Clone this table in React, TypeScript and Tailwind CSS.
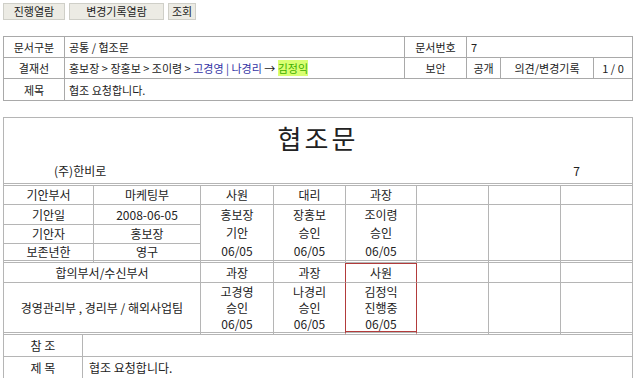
import React from "react";

const th = "h-[21px] border-r border-b border-[#a9a9a9] text-center p-0";
const td = "h-[21px] border-r border-b border-[#a9a9a9] text-left px-[4px] py-0";

const cell = "border-r border-b border-[#b5b5b5] text-center p-0";
const cellEnd = "border-b border-[#b5b5b5] text-center p-0";
const cellD = "border-r border-b-[3px] border-double border-[#b5b5b5] text-center p-0";
const cellEndD = "border-b-[3px] border-double border-[#b5b5b5] text-center p-0";

const Stack = ({ lines, tight }: { lines: string[]; tight?: boolean }) => (
  <div className={tight ? "flex flex-col items-center leading-[16px]" : "flex flex-col items-center leading-[18px]"}>
    {lines.map((l, i) => (
      <span key={i}>{l}</span>
    ))}
  </div>
);

const DocView = () => {
  return (
    <div className="w-[634px] h-[378px] overflow-hidden bg-white text-[#222] text-[12px] leading-[14px] font-['Noto_Sans_CJK_KR','Liberation_Sans',sans-serif]">
      <div className="flex gap-[4px] pt-[3px] pl-[3px]">
        <button className="w-[62px] h-[17px] leading-[15px] bg-[#ecebe4] border border-[#cfcfc8] text-[11px]">진행열람</button>
        <button className="w-[95px] h-[17px] leading-[15px] bg-[#ecebe4] border border-[#cfcfc8] text-[11px]">변경기록열람</button>
        <button className="w-[28px] h-[17px] leading-[15px] bg-[#ecebe4] border border-[#cfcfc8] text-[11px]">조회</button>
      </div>

      <table className="ml-[3px] mt-[16px] w-[630px] table-fixed border-separate border-spacing-0 border-l border-t border-[#a9a9a9] text-[11px]">
        <colgroup>
          <col className="w-[61px]" />
          <col className="w-[340px]" />
          <col className="w-[62px]" />
          <col className="w-[34px]" />
          <col className="w-[93px]" />
          <col className="w-[39px]" />
        </colgroup>
        <tbody>
          <tr>
            <td className={th}>문서구분</td>
            <td className={td}>공통 / 협조문</td>
            <td className={th}>문서번호</td>
            <td colSpan={3} className={td}>7</td>
          </tr>
          <tr>
            <td className={th}>결재선</td>
            <td className={td + " whitespace-nowrap"}>
              홍보장 &gt; 장홍보 &gt; 조이령 &gt;{" "}
              <span className="text-[#3535a5]">고경영 | 나경리</span> →{" "}
              <span className="text-[#3fae00] bg-[#d9ff72]">김정익</span>
            </td>
            <td className={th}>보안</td>
            <td className={th}>공개</td>
            <td className={th}>의견/변경기록</td>
            <td className={th}>1 / 0</td>
          </tr>
          <tr>
            <td className="h-[22px] border-r border-b border-[#a9a9a9] text-center p-0">제목</td>
            <td colSpan={5} className="h-[22px] border-r border-b border-[#a9a9a9] px-[4px] py-0">
              협조 요청합니다.
            </td>
          </tr>
        </tbody>
      </table>

      <div className="ml-[3px] mt-[16px] w-[630px] border border-[#b5b5b5]">
        <div className="h-[68px] border-b-[3px] border-double border-[#b5b5b5] flex flex-col">
          <div className="pt-[5px] text-center text-[26px] leading-[30px] tracking-[3px]">협조문</div>
          <div className="mt-auto flex justify-between pl-[50px] pr-[52px] pb-[4px] leading-[16px]">
            <span>(주)한비로</span>
            <span>7</span>
          </div>
        </div>

        <table className="w-full table-fixed border-separate border-spacing-0">
          <colgroup>
            <col className="w-[90px]" />
            <col className="w-[107px]" />
            <col className="w-[73px]" />
            <col className="w-[72px]" />
            <col className="w-[71px]" />
            <col className="w-[72px]" />
            <col className="w-[72px]" />
            <col className="w-[71px]" />
          </colgroup>
          <tbody>
            <tr className="h-[19px]">
              <td className={cell}>기안부서</td>
              <td className={cell}>마케팅부</td>
              <td className={cell}>사원</td>
              <td className={cell}>대리</td>
              <td className={cell}>과장</td>
              <td className={cell}></td>
              <td className={cell}></td>
              <td className={cellEnd}></td>
            </tr>
            <tr className="h-[20px]">
              <td className={cell}>기안일</td>
              <td className={cell}>2008-06-05</td>
              <td rowSpan={3} className={cellD}>
                <Stack lines={["홍보장", "기안", "06/05"]} />
              </td>
              <td rowSpan={3} className={cellD}>
                <Stack lines={["장홍보", "승인", "06/05"]} />
              </td>
              <td rowSpan={3} className={cellD}>
                <Stack lines={["조이령", "승인", "06/05"]} />
              </td>
              <td rowSpan={3} className={cellD}></td>
              <td rowSpan={3} className={cellD}></td>
              <td rowSpan={3} className={cellEndD}></td>
            </tr>
            <tr className="h-[19px]">
              <td className={cell}>기안자</td>
              <td className={cell}>홍보장</td>
            </tr>
            <tr className="h-[19px]">
              <td className={cellD}>보존년한</td>
              <td className={cellD}>영구</td>
            </tr>
            <tr className="h-[20px]">
              <td colSpan={2} className={cell}>합의부서/수신부서</td>
              <td className={cell}>과장</td>
              <td className="border-r border-b border-r-[#b23b3b] border-b-[#b5b5b5] text-center p-0">과장</td>
              <td className="border-r border-b border-r-[#b23b3b] border-b-[#b5b5b5] text-center p-0 shadow-[inset_0_1px_0_#b23b3b]">
                사원
              </td>
              <td className={cell}></td>
              <td className={cell}></td>
              <td className={cellEnd}></td>
            </tr>
            <tr className="h-[52px]">
              <td colSpan={2} className={cellD}>경영관리부 , 경리부 / 해외사업팀</td>
              <td className={cellD}>
                <Stack tight lines={["고경영", "승인", "06/05"]} />
              </td>
              <td className="border-r border-b-[3px] border-double border-r-[#b23b3b] border-b-[#b5b5b5] text-center p-0">
                <Stack tight lines={["나경리", "승인", "06/05"]} />
              </td>
              <td className="border-r border-b-[3px] border-double border-r-[#b23b3b] border-b-[#b5b5b5] text-center p-0 shadow-[inset_0_-1px_0_#b23b3b]">
                <Stack tight lines={["김정익", "진행중", "06/05"]} />
              </td>
              <td className={cellD}></td>
              <td className={cellD}></td>
              <td className={cellEndD}></td>
            </tr>
          </tbody>
        </table>

        <table className="w-full table-fixed border-separate border-spacing-0">
          <colgroup>
            <col className="w-[79px]" />
            <col className="w-[549px]" />
          </colgroup>
          <tbody>
            <tr className="h-[22px]">
              <td className="border-r border-b border-[#b5b5b5] text-center p-0">참 조</td>
              <td className="border-b border-[#b5b5b5] p-0"></td>
            </tr>
            <tr className="h-[21px]">
              <td className="border-r border-[#b5b5b5] text-center p-0">제 목</td>
              <td className="px-[6px] py-0">협조 요청합니다.</td>
            </tr>
          </tbody>
        </table>
      </div>
    </div>
  );
};

export default function App() {
  return <DocView />;
}
